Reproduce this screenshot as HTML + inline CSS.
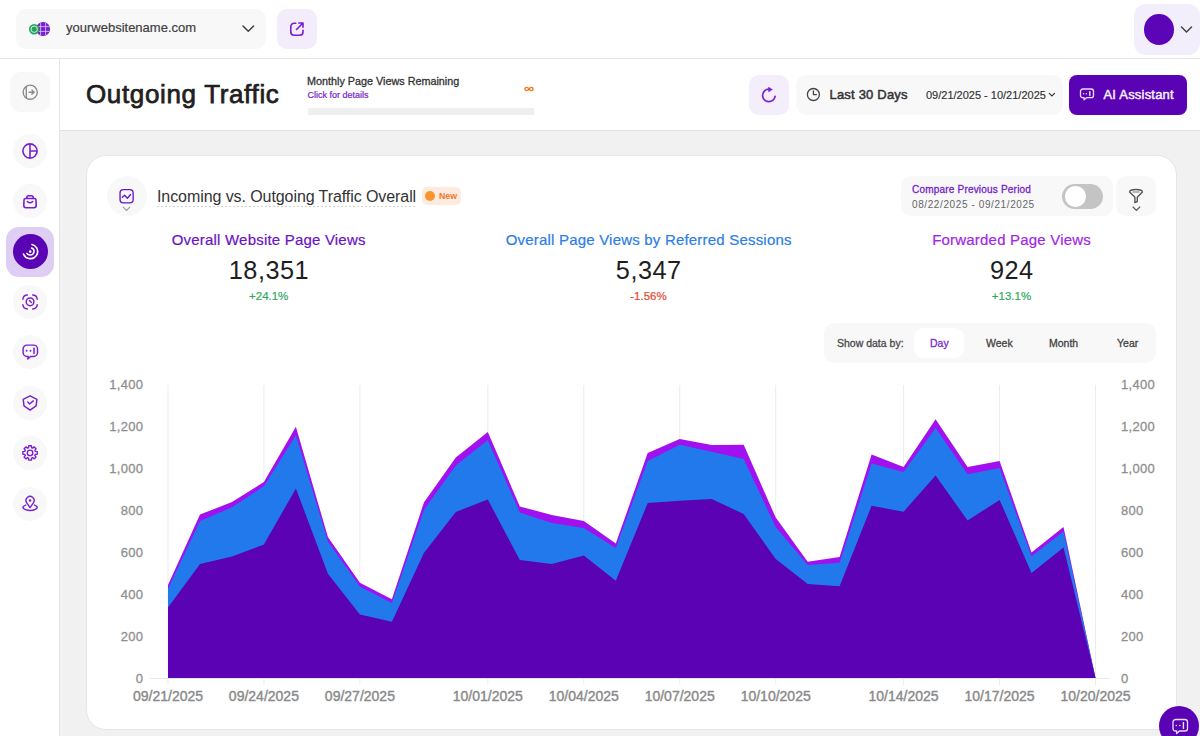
<!DOCTYPE html>
<html><head><meta charset="utf-8">
<style>
*{margin:0;padding:0;box-sizing:border-box}
html,body{width:1200px;height:736px;overflow:hidden;background:#fff;font-family:"Liberation Sans",sans-serif;color:#333}
.a{position:absolute}
.topbar{left:0;top:0;width:1200px;height:59px;background:#fff;border-bottom:1px solid #E6E6E6}
.side{left:0;top:59px;width:60px;height:677px;background:#fff;border-right:1px solid #E6E6E6}
.hdr{left:60px;top:59px;width:1140px;height:72px;background:#fff;border-bottom:1px solid #E2E2E2}
.main{left:60px;top:131px;width:1140px;height:605px;background:#F1F1F1}
.card{left:86px;top:155px;width:1091px;height:575px;background:#fff;border:1px solid #E6E6E6;border-radius:20px}
.sbtn{width:34px;height:34px;border-radius:50%;background:#F8F8F8;left:13px}
.sbtn svg{position:absolute;left:7px;top:7px}
.sb{-webkit-text-stroke:0.3px currentColor}
.yl{position:absolute;font-size:13px;color:#8F8F8F;line-height:16px;text-align:right;width:60px;letter-spacing:0.3px}
.xl{position:absolute;font-size:14px;color:#8A8A8A;line-height:16px;text-align:center;width:100px;-webkit-text-stroke:0.4px currentColor}
.lbl{position:absolute;font-size:15px;line-height:18px;text-align:center;width:360px;white-space:nowrap;-webkit-text-stroke:0.2px currentColor}
.num{position:absolute;font-size:25.3px;line-height:28px;text-align:center;width:300px;color:#1E1E1E;letter-spacing:0.5px;text-indent:0.5px}
.pct{position:absolute;font-size:11.5px;line-height:14px;text-align:center;width:200px;-webkit-text-stroke:0.2px currentColor}
</style></head><body>
<!-- top bar -->
<div class="a topbar"></div>
<div class="a" style="left:16px;top:9px;width:250px;height:40px;background:#F8F8F8;border-radius:10px"></div>
<svg class="a" style="left:26px;top:20px" width="26" height="18" viewBox="0 0 26 18">
  <circle cx="17.1" cy="9" r="7" fill="#7A1FCF"/>
  <g stroke="#E9DAFA" stroke-width="0.8" fill="none" opacity="0.9">
    <line x1="14.6" y1="3" x2="14.6" y2="15"/><line x1="19.6" y1="3" x2="19.6" y2="15"/>
    <line x1="11" y1="6.6" x2="23.5" y2="6.6"/><line x1="11" y1="11.4" x2="23.5" y2="11.4"/>
  </g>
  <circle cx="8.2" cy="9.2" r="5.2" fill="#22A45D"/>
  <circle cx="8.2" cy="9.2" r="3.2" fill="none" stroke="#E6F5EC" stroke-width="0.9"/>
</svg>
<div class="a" style="left:66px;top:20px;font-size:13px;line-height:16px;color:#3F3F3F;-webkit-text-stroke:0.2px #3F3F3F">yourwebsitename.com</div>
<svg class="a" style="left:241px;top:23px" width="14" height="10" viewBox="0 0 14 10"><path d="M2 3 L7.3 8.2 L12.6 3" stroke="#444" stroke-width="1.6" fill="none" stroke-linecap="round" stroke-linejoin="round"/></svg>
<div class="a" style="left:277px;top:9px;width:40px;height:40px;background:#F2ECFB;border-radius:10px"></div>
<svg class="a" style="left:289px;top:21px" width="16" height="16" viewBox="0 0 16 16"><path d="M6.8 2.3 H5 A3.2 3.2 0 0 0 1.8 5.5 V11 A3.2 3.2 0 0 0 5 14.2 H10.8 A3.2 3.2 0 0 0 14 11 V9.2" stroke="#7A1FCF" stroke-width="1.6" fill="none" stroke-linecap="round"/><path d="M9.8 2 H14 V6.2 M14 2 L7.5 8.5" stroke="#7A1FCF" stroke-width="1.6" fill="none" stroke-linecap="round" stroke-linejoin="round"/></svg>
<div class="a" style="left:1134px;top:4px;width:66px;height:51px;background:#F3EEFB;border-radius:12px"></div>
<div class="a" style="left:1144px;top:14.3px;width:30px;height:30.5px;background:#5C05B8;border-radius:50%"></div>
<svg class="a" style="left:1180px;top:24.5px" width="13" height="9" viewBox="0 0 13 9"><path d="M1.5 2 L6.5 7 L11.5 2" stroke="#444" stroke-width="1.5" fill="none" stroke-linecap="round" stroke-linejoin="round"/></svg>

<!-- sidebar -->
<div class="a side"></div>
<div class="a" style="left:10px;top:72px;width:40px;height:40px;background:#F8F8F8;border-radius:11px"></div>
<svg class="a" style="left:21px;top:83px" width="18" height="18" viewBox="0 0 18 18"><circle cx="9.2" cy="9.2" r="7.05" stroke="#8A8A8A" stroke-width="1.35" fill="none"/><line x1="5.3" y1="3.3" x2="5.3" y2="15.1" stroke="#8A8A8A" stroke-width="1.35"/><path d="M8.1 9.2 H13.1 M10.8 7.1 L13.2 9.2 L10.8 11.3" stroke="#8A8A8A" stroke-width="1.35" fill="none" stroke-linecap="round" stroke-linejoin="round"/></svg>

<div class="a sbtn" style="top:133.5px"><svg width="20" height="20" viewBox="0 0 20 20"><circle cx="10" cy="10" r="7.1" stroke="#7A1FCF" stroke-width="1.6" fill="none"/><path d="M10 3 V17 M10 10 H17" stroke="#7A1FCF" stroke-width="1.6"/></svg></div>
<div class="a sbtn" style="top:183.9px"><svg width="20" height="20" viewBox="0 0 20 20"><path d="M6.8 7.5 V6.5 A1.8 1.8 0 0 1 8.6 4.7 H11.4 A1.8 1.8 0 0 1 13.2 6.5 V7.5" stroke="#7A1FCF" stroke-width="1.6" fill="none"/><path d="M5.6 7.5 H14.4 A1.6 1.6 0 0 1 16 9.1 L16.2 14.6 A2.2 2.2 0 0 1 14 16.8 H6 A2.2 2.2 0 0 1 3.8 14.6 L4 9.1 A1.6 1.6 0 0 1 5.6 7.5 Z" stroke="#7A1FCF" stroke-width="1.6" fill="none"/><path d="M7.4 10.6 Q10 12.8 12.6 10.6" stroke="#7A1FCF" stroke-width="1.5" fill="none" stroke-linecap="round"/></svg></div>
<div class="a" style="left:6px;top:227px;width:48px;height:50px;background:#DFCEF3;border-radius:13px"></div>
<div class="a" style="left:13px;top:234px;width:35px;height:35px;background:#5A03B5;border-radius:50%"></div>
<svg class="a" style="left:20px;top:241px" width="21" height="21" viewBox="0 0 21 21"><path d="M12 3.5 A7 7 0 0 1 9 17.5 A7 7 0 0 1 3.5 13" stroke="#fff" stroke-width="1.6" fill="none" stroke-linecap="round"/><path d="M11.5 7 A3.6 3.6 0 0 1 10 14 A3.6 3.6 0 0 1 7 12.5" stroke="#fff" stroke-width="1.6" fill="none" stroke-linecap="round"/><circle cx="10.2" cy="10.6" r="1.3" fill="#fff"/></svg>
<div class="a sbtn" style="top:284.9px"><svg width="20" height="20" viewBox="0 0 20 20"><path d="M2.9 7.2 A4.6 4.6 0 0 1 7.4 3.0 M12.7 3.0 A4.6 4.6 0 0 1 17.2 7.2 M17.2 12.8 A4.6 4.6 0 0 1 12.7 17.0 M7.4 17.0 A4.6 4.6 0 0 1 2.9 12.8" stroke="#7A1FCF" stroke-width="1.45" fill="none" stroke-linecap="round"/><circle cx="10.06" cy="9.8" r="3.85" stroke="#7A1FCF" stroke-width="1.45" fill="none"/><path d="M9.5 8.6 L11.3 10.5" stroke="#7A1FCF" stroke-width="1.4" stroke-linecap="round"/></svg></div>
<div class="a sbtn" style="top:335.1px"><svg width="20" height="20" viewBox="0 0 20 20"><path d="M7 3.1 H13.6 A3.9 3.9 0 0 1 17.5 7 V10.6 A3.9 3.9 0 0 1 13.6 14.5 H10.6 L7.8 17 L8.2 14.5 H7 A3.9 3.9 0 0 1 3.1 10.6 V7 A3.9 3.9 0 0 1 7 3.1 Z" stroke="#7A1FCF" stroke-width="1.45" fill="none" stroke-linejoin="round"/><circle cx="6.6" cy="8.8" r="0.95" fill="#7A1FCF"/><circle cx="10.5" cy="8.8" r="0.95" fill="#7A1FCF"/><path d="M14 6.2 V11.4" stroke="#7A1FCF" stroke-width="1.5" stroke-linecap="round"/></svg></div>
<div class="a sbtn" style="top:385.5px"><svg width="20" height="20" viewBox="0 0 20 20"><path d="M10.06 2.9 L16.9 6.4 L16.1 12.8 L10.06 17.1 L4.0 12.8 L3.2 6.4 Z" stroke="#7A1FCF" stroke-width="1.45" fill="none" stroke-linejoin="round"/><path d="M7.8 8.9 L9.5 11.0 L13.3 7.9" stroke="#7A1FCF" stroke-width="1.45" fill="none" stroke-linecap="round" stroke-linejoin="round"/></svg></div>
<div class="a sbtn" style="top:436px"><svg width="20" height="20" viewBox="0 0 20 20"><path d="M8.48 4.74 L8.79 2.71 L11.33 2.71 L11.64 4.74 L12.60 5.13 L14.25 3.92 L16.04 5.71 L14.83 7.36 L15.22 8.32 L17.25 8.63 L17.25 11.17 L15.22 11.48 L14.83 12.44 L16.04 14.09 L14.25 15.88 L12.60 14.67 L11.64 15.06 L11.33 17.09 L8.79 17.09 L8.48 15.06 L7.52 14.67 L5.87 15.88 L4.08 14.09 L5.29 12.44 L4.90 11.48 L2.87 11.17 L2.87 8.63 L4.90 8.32 L5.29 7.36 L4.08 5.71 L5.87 3.92 L7.52 5.13 Z" stroke="#7A1FCF" stroke-width="1.4" fill="none" stroke-linejoin="round"/><circle cx="10.06" cy="9.9" r="2.75" stroke="#7A1FCF" stroke-width="1.4" fill="none"/></svg></div>
<div class="a sbtn" style="top:486.5px"><svg width="20" height="20" viewBox="0 0 20 20"><path d="M10.06 13.6 L6.74 8.82 A4.05 4.05 0 1 1 13.38 8.82 Z" stroke="#7A1FCF" stroke-width="1.45" fill="none" stroke-linejoin="round"/><circle cx="10.06" cy="6.4" r="1.25" fill="#7A1FCF"/><path d="M5.6 11.1 A7.1 2.9 0 1 0 14.6 11.1" stroke="#7A1FCF" stroke-width="1.45" fill="none" stroke-linecap="round"/></svg></div>

<!-- header -->
<div class="a hdr"></div>
<div class="a" style="left:86px;top:78px;font-size:26px;line-height:32px;color:#1F1F1F;letter-spacing:0.65px;-webkit-text-stroke:0.75px #1F1F1F">Outgoing Traffic</div>
<div class="a sb" style="left:307px;top:74px;font-size:10.8px;line-height:14px;color:#333">Monthly Page Views Remaining</div>
<div class="a sb" style="left:307.5px;top:89px;font-size:9px;line-height:12px;color:#7424CC;-webkit-text-stroke:0.2px #7424CC">Click for details</div>
<svg class="a" style="left:524px;top:85.5px" width="10" height="6" viewBox="0 0 10 6"><path d="M5 3 C3.8 1.2 1 0.6 1 3 C1 5.4 3.8 4.8 5 3 C6.2 1.2 9 0.6 9 3 C9 5.4 6.2 4.8 5 3 Z" stroke="#F07A22" stroke-width="1.4" fill="none"/></svg>
<div class="a" style="left:307.5px;top:108px;width:226.5px;height:7px;background:#EFEFEF"></div>

<div class="a" style="left:749px;top:75px;width:40px;height:40px;background:#F3EDFC;border-radius:10px"></div>
<svg class="a" style="left:760px;top:86px" width="18" height="18" viewBox="0 0 18 18"><path d="M8.9 3.1 A6.3 6.3 0 1 0 15.1 10.4" stroke="#7A1FCF" stroke-width="1.7" fill="none" stroke-linecap="round"/><path d="M8.6 1.2 L12.3 3.5 L8.6 5.8 Z" fill="#7A1FCF" stroke="#7A1FCF" stroke-width="0.6" stroke-linejoin="round"/></svg>
<div class="a" style="left:796px;top:75px;width:267px;height:40px;background:#F8F8F8;border-radius:10px"></div>
<svg class="a" style="left:806px;top:86px" width="16" height="16" viewBox="0 0 16 16"><circle cx="7.4" cy="8.5" r="6" stroke="#444" stroke-width="1.3" fill="none"/><path d="M7.4 5 V8.6 H10.4" stroke="#444" stroke-width="1.3" fill="none" stroke-linecap="round" stroke-linejoin="round"/></svg>
<div class="a" style="left:829.5px;top:86px;font-size:13px;line-height:17px;color:#333;letter-spacing:0.2px;-webkit-text-stroke:0.5px #333">Last 30 Days</div>
<div class="a" style="left:926px;top:88.5px;font-size:11px;line-height:13px;color:#333;-webkit-text-stroke:0.15px #333">09/21/2025 - 10/21/2025</div>
<svg class="a" style="left:1048px;top:91.5px" width="8" height="6" viewBox="0 0 8 6"><path d="M1.3 1.4 L3.9 3.9 L6.5 1.4" stroke="#333" stroke-width="1.15" fill="none" stroke-linecap="round"/></svg>
<div class="a" style="left:1069px;top:75px;width:118px;height:40px;background:#5A03B5;border-radius:8px"></div>
<svg class="a" style="left:1079px;top:86px" width="18" height="18" viewBox="0 0 18 18"><path d="M3.8 3 H12.2 A2.3 2.3 0 0 1 14.5 5.3 V9.4 A2.3 2.3 0 0 1 12.2 11.7 H7.6 L5 13.8 V11.7 H3.8 A2.3 2.3 0 0 1 1.5 9.4 V5.3 A2.3 2.3 0 0 1 3.8 3 Z" stroke="#EBDDFB" stroke-width="1.3" fill="none" stroke-linejoin="round"/><circle cx="4.6" cy="7.8" r="0.75" fill="#EBDDFB"/><circle cx="7.4" cy="7.8" r="0.75" fill="#EBDDFB"/><path d="M10.8 5.6 V9.6" stroke="#EBDDFB" stroke-width="1.4" stroke-linecap="round"/></svg>
<div class="a" style="left:1103.5px;top:86px;font-size:13px;line-height:17px;color:#F6F0FE;letter-spacing:0.2px;-webkit-text-stroke:0.45px #F6F0FE">AI Assistant</div>

<!-- main -->
<div class="a main"></div>
<div class="a card"></div>
<div class="a" style="left:107px;top:176px;width:40px;height:40px;background:#F8F8F8;border-radius:50%"></div>
<svg class="a" style="left:117px;top:186px" width="20" height="28" viewBox="0 0 20 28"><rect x="3.05" y="3.65" width="13.1" height="13.2" rx="3.3" stroke="#6A14C8" stroke-width="1.35" fill="none"/><path d="M5.3 11.3 L7.6 9.3 L10.4 12.2 L13.6 8.5" stroke="#6A14C8" stroke-width="1.35" fill="none" stroke-linecap="round" stroke-linejoin="round"/><path d="M6.1 21.2 L9.6 24.5 L12.8 21.2" stroke="#9A9A9A" stroke-width="1.1" fill="none" stroke-linecap="round"/></svg>
<div class="a" style="left:157px;top:188px;font-size:16px;line-height:18px;color:#333;letter-spacing:-0.08px">Incoming vs. Outgoing Traffic Overall</div>
<div class="a" style="left:157px;top:206px;width:258px;height:1px;background:repeating-linear-gradient(90deg,#D2D2D2 0 2px,transparent 2px 4px)"></div>
<div class="a" style="left:422px;top:187px;width:39px;height:18px;background:#FDEBDF;border-radius:5px"></div>
<div class="a" style="left:425px;top:191px;width:10.2px;height:10.2px;background:#F7962F;border-radius:50%"></div>
<div class="a" style="left:439px;top:191px;font-size:8.8px;line-height:11px;font-weight:bold;color:#F2782C">New</div>

<div class="a" style="left:901px;top:176px;width:212px;height:40px;background:#F8F8F8;border-radius:10px"></div>
<div class="a sb" style="left:912px;top:184px;font-size:10px;line-height:12px;color:#7522CC;letter-spacing:0.2px">Compare Previous Period</div>
<div class="a" style="left:912px;top:199px;font-size:10px;line-height:12px;color:#666;letter-spacing:0.6px">08/22/2025 - 09/21/2025</div>
<div class="a" style="left:1062px;top:184px;width:41px;height:25px;background:#C4C4C4;border-radius:12.5px"></div>
<div class="a" style="left:1065px;top:186px;width:20.5px;height:20.5px;background:#fff;border-radius:50%"></div>
<div class="a" style="left:1116px;top:176px;width:40px;height:40px;background:#F8F8F8;border-radius:10px"></div>
<svg class="a" style="left:1126px;top:186px" width="20" height="28" viewBox="0 0 20 28"><path d="M3.6 6 Q3.6 3.5 10 3.5 Q16.4 3.5 16.4 6 L11.3 11.2 V15.6 L8.9 16.5 V11.2 Z" stroke="#555" stroke-width="1.4" fill="none" stroke-linejoin="round"/><path d="M6.5 6 H13.5" stroke="#888" stroke-width="1.1"/><path d="M7 21 L10.4 24.4 L13.8 21" stroke="#555" stroke-width="1.1" fill="none" stroke-linecap="round"/></svg>

<div class="lbl" style="left:88.7px;top:231px;color:#6A12C6;letter-spacing:0.2px">Overall Website Page Views</div>
<div class="num" style="left:118.7px;top:256px">18,351</div>
<div class="pct" style="left:168.7px;top:289px;color:#2FA863">+24.1%</div>
<div class="lbl" style="left:468.7px;top:231px;color:#2B7DE9;letter-spacing:0.2px">Overall Page Views by Referred Sessions</div>
<div class="num" style="left:498.5px;top:256px">5,347</div>
<div class="pct" style="left:548.5px;top:289px;color:#E4472F">-1.56%</div>
<div class="lbl" style="left:831.6px;top:231px;color:#A325E8;letter-spacing:0.2px">Forwarded Page Views</div>
<div class="num" style="left:861.5px;top:256px">924</div>
<div class="pct" style="left:911.5px;top:289px;color:#2FA863">+13.1%</div>

<div class="a" style="left:824px;top:323px;width:332px;height:40px;background:#F8F8F8;border-radius:10px"></div>
<div class="a sb" style="left:837px;top:337px;font-size:10.5px;line-height:13px;color:#4A4A4A">Show data by:</div>
<div class="a" style="left:914px;top:328px;width:50px;height:30px;background:#fff;border-radius:9px"></div>
<div class="a sb" style="left:930px;top:337px;font-size:10.5px;line-height:13px;color:#7A2ACF">Day</div>
<div class="a sb" style="left:986px;top:337px;font-size:10.5px;line-height:13px;color:#444">Week</div>
<div class="a sb" style="left:1049px;top:337px;font-size:10.5px;line-height:13px;color:#444">Month</div>
<div class="a sb" style="left:1117px;top:337px;font-size:10.5px;line-height:13px;color:#444">Year</div>

<svg width="1200" height="736" style="position:absolute;left:0;top:0">
<line x1="168.00" y1="385" x2="168.00" y2="685" stroke="#ECECEC" stroke-width="1"/>
<line x1="263.95" y1="385" x2="263.95" y2="685" stroke="#ECECEC" stroke-width="1"/>
<line x1="359.90" y1="385" x2="359.90" y2="685" stroke="#ECECEC" stroke-width="1"/>
<line x1="487.83" y1="385" x2="487.83" y2="685" stroke="#ECECEC" stroke-width="1"/>
<line x1="583.78" y1="385" x2="583.78" y2="685" stroke="#ECECEC" stroke-width="1"/>
<line x1="679.73" y1="385" x2="679.73" y2="685" stroke="#ECECEC" stroke-width="1"/>
<line x1="775.68" y1="385" x2="775.68" y2="685" stroke="#ECECEC" stroke-width="1"/>
<line x1="903.61" y1="385" x2="903.61" y2="685" stroke="#ECECEC" stroke-width="1"/>
<line x1="999.56" y1="385" x2="999.56" y2="685" stroke="#ECECEC" stroke-width="1"/>
<line x1="1095.51" y1="385" x2="1095.51" y2="685" stroke="#ECECEC" stroke-width="1"/>
<line x1="150" y1="678.5" x2="1110" y2="678.5" stroke="#E9E9E9" stroke-width="1"/>
<polygon points="168.0,678 168.0,585.0 200.0,514.6 232.0,502.0 263.9,481.9 295.9,426.8 327.9,537.1 359.9,582.7 391.9,599.2 423.9,502.6 455.8,457.5 487.8,431.9 519.8,506.4 551.8,515.0 583.8,521.1 615.8,543.6 647.7,453.1 679.7,439.0 711.7,444.9 743.7,444.7 775.7,517.6 807.7,561.7 839.6,557.0 871.6,454.6 903.6,467.0 935.6,419.3 967.6,467.0 999.6,461.1 1031.5,552.6 1063.5,527.0 1095.5,678.0 1095.5,678" fill="#A110EE"/>
<polygon points="168.0,678 168.0,588.8 200.0,521.1 232.0,507.3 263.9,486.3 295.9,435.2 327.9,541.5 359.9,586.4 391.9,603.0 423.9,510.0 455.8,465.5 487.8,440.1 519.8,512.5 551.8,523.0 583.8,528.1 615.8,548.0 647.7,461.1 679.7,444.7 711.7,451.8 743.7,459.0 775.7,527.0 807.7,565.0 839.6,562.7 871.6,463.6 903.6,472.0 935.6,428.1 967.6,474.3 999.6,468.0 1031.5,556.2 1063.5,531.6 1095.5,678.0 1095.5,678" fill="#2179EC"/>
<polygon points="168.0,678 168.0,607.4 200.0,564.0 232.0,556.4 263.9,544.6 295.9,488.4 327.9,573.8 359.9,614.6 391.9,621.7 423.9,553.0 455.8,511.9 487.8,499.5 519.8,560.0 551.8,564.0 583.8,555.6 615.8,580.8 647.7,503.1 679.7,500.8 711.7,499.1 743.7,514.0 775.7,559.1 807.7,584.1 839.6,586.2 871.6,505.8 903.6,511.7 935.6,475.4 967.6,520.5 999.6,499.9 1031.5,573.0 1063.5,547.6 1095.5,678.0 1095.5,678" fill="#5A02B4"/>
</svg>
<div class="yl sb" style="top:377.3px;left:83.30000000000001px">1,400</div>
<div class="yl sb" style="top:377.3px;left:1121px;text-align:left">1,400</div>
<div class="yl sb" style="top:419.3px;left:83.30000000000001px">1,200</div>
<div class="yl sb" style="top:419.3px;left:1121px;text-align:left">1,200</div>
<div class="yl sb" style="top:461.3px;left:83.30000000000001px">1,000</div>
<div class="yl sb" style="top:461.3px;left:1121px;text-align:left">1,000</div>
<div class="yl sb" style="top:503.3px;left:83.30000000000001px">800</div>
<div class="yl sb" style="top:503.3px;left:1121px;text-align:left">800</div>
<div class="yl sb" style="top:545.3px;left:83.30000000000001px">600</div>
<div class="yl sb" style="top:545.3px;left:1121px;text-align:left">600</div>
<div class="yl sb" style="top:587.3px;left:83.30000000000001px">400</div>
<div class="yl sb" style="top:587.3px;left:1121px;text-align:left">400</div>
<div class="yl sb" style="top:629.3px;left:83.30000000000001px">200</div>
<div class="yl sb" style="top:629.3px;left:1121px;text-align:left">200</div>
<div class="yl sb" style="top:671.3px;left:83.30000000000001px">0</div>
<div class="yl sb" style="top:671.3px;left:1121px;text-align:left">0</div>
<div class="xl sb" style="left:118.0px;top:688px">09/21/2025</div>
<div class="xl sb" style="left:213.9px;top:688px">09/24/2025</div>
<div class="xl sb" style="left:309.9px;top:688px">09/27/2025</div>
<div class="xl sb" style="left:437.8px;top:688px">10/01/2025</div>
<div class="xl sb" style="left:533.8px;top:688px">10/04/2025</div>
<div class="xl sb" style="left:629.7px;top:688px">10/07/2025</div>
<div class="xl sb" style="left:725.7px;top:688px">10/10/2025</div>
<div class="xl sb" style="left:853.6px;top:688px">10/14/2025</div>
<div class="xl sb" style="left:949.6px;top:688px">10/17/2025</div>
<div class="xl sb" style="left:1045.5px;top:688px">10/20/2025</div>

<div class="a" style="left:1159px;top:706px;width:40px;height:40px;background:#5A03B5;border-radius:50%"></div>
<svg class="a" style="left:1171px;top:717px" width="20" height="20" viewBox="0 0 20 20"><path d="M4.6 2.5 H13.9 A2.6 2.6 0 0 1 16.5 5.1 V11.4 A2.6 2.6 0 0 1 13.9 14 H8.4 L5.6 16.6 V14 H4.6 A2.6 2.6 0 0 1 2 11.4 V5.1 A2.6 2.6 0 0 1 4.6 2.5 Z" stroke="#EBDDFB" stroke-width="1.3" fill="none" stroke-linejoin="round"/><circle cx="5.3" cy="8.5" r="0.8" fill="#EBDDFB"/><circle cx="8.8" cy="8.5" r="0.8" fill="#EBDDFB"/><path d="M12.4 5.4 V11.4" stroke="#EBDDFB" stroke-width="1.4" stroke-linecap="round"/></svg>
</body></html>
